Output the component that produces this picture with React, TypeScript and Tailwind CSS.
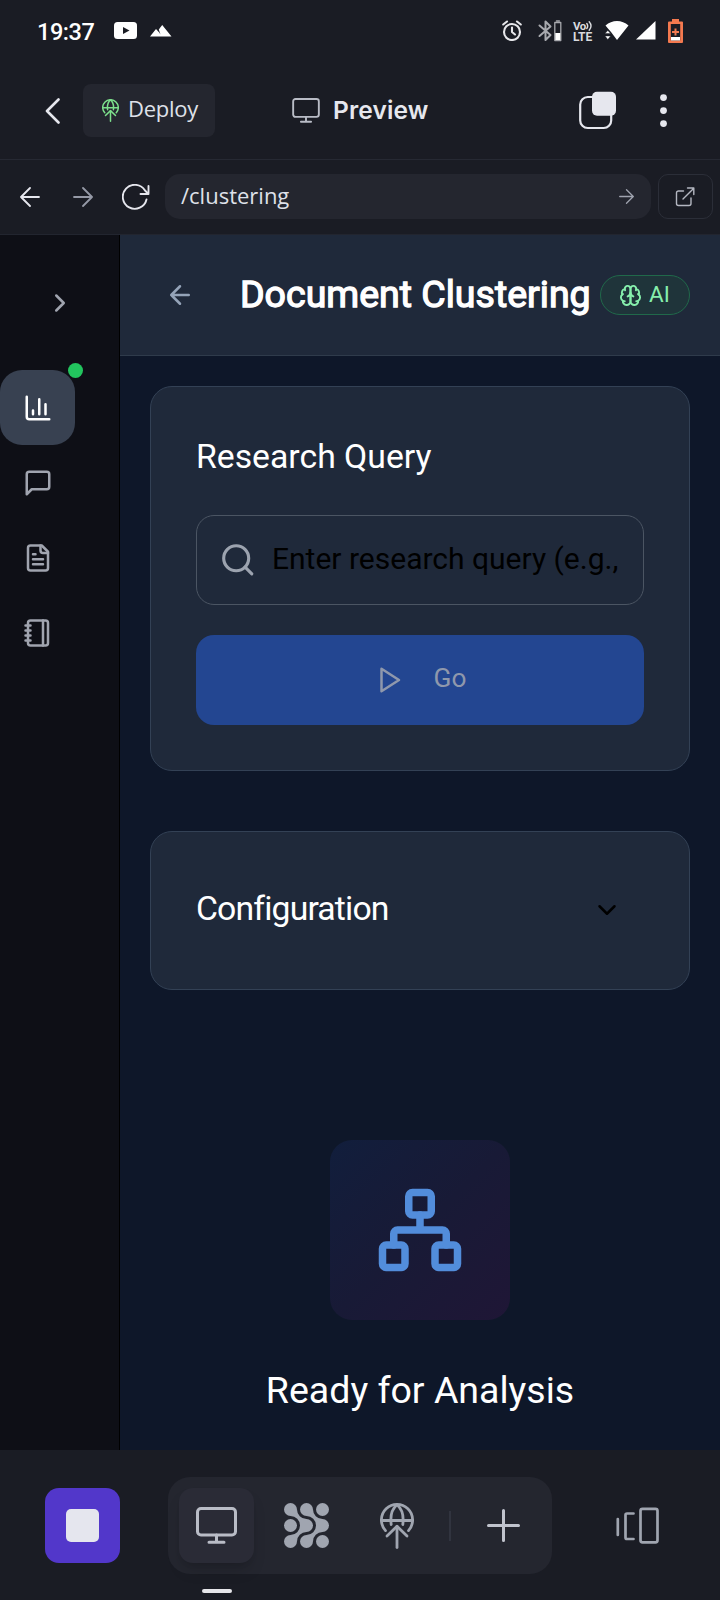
import type { ReactNode } from "react";

type IconProps = {
  w: number;
  h?: number;
  box?: string;
  sw?: number;
  className?: string;
  children: ReactNode;
};

function Icon({ w, h = w, box = "0 0 24 24", sw = 2, className = "", children }: IconProps) {
  return (
    <svg
      width={w}
      height={h}
      viewBox={box}
      fill="none"
      stroke="currentColor"
      strokeWidth={sw}
      strokeLinecap="round"
      strokeLinejoin="round"
      className={`block shrink-0 ${className}`}
    >
      {children}
    </svg>
  );
}

function GlobeUp({ w, h, sw, className }: { w: number; h: number; sw: number; className?: string }) {
  return (
    <Icon w={w} h={h} box="0 0 34 46" sw={sw} className={className}>
      <path d="M5.5 27.6A15.6 15.6 0 1 1 28.5 27.6" />
      <path d="M1.5 17.5h31" />
      <path d="M11.2 21.5C10.2 14 12 6 17 1.8 22 6 23.8 14 22.8 21.500" />
      <path d="M17 44.500V23.500" />
      <path d="M7 33L17 23.300l10 9.700" />
    </Icon>
  );
}

function Monitor({ w, h, sw }: { w: number; h: number; sw: number }) {
  return (
    <Icon w={w} h={h} box="0 0 41 37" sw={sw} className="text-[#b9bcc6]">
      <rect x="1.500" y="1.500" width="38" height="26.500" rx="3.500" />
      <path d="M20.500 28v7M13 35.200h15" />
    </Icon>
  );
}

function StatusBar() {
  return (
    <div className="flex h-[62px] items-start pl-[37px] pr-[37px] pt-[18px] text-white">
      <span className="mt-px w-[77px] font-[Roboto,sans-serif] text-[23.5px] font-medium leading-[26px] tracking-[-0.45px]">19:37</span>
      <svg width="23" height="17" viewBox="0 0 23 17" className="mt-1 block">
        <rect width="23" height="17" rx="3.500" fill="#fff" />
        <path d="M9 5l6.500 3.500L9 12z" fill="#1a1c24" />
      </svg>
      <svg width="22" height="12" viewBox="0 0 22 12" className="ml-[13px] mt-[7px] block">
        <path d="M0 11.500L6 4l3.200 3.600L10.500 9.500 8.800 4.600 12.200 0 21.500 11.500z" fill="#fff" />
      </svg>
      <div className="ml-auto flex items-start">
        <Icon w={20} h={22} box="0 0 20 22" sw={2.100} className="mr-px mt-px text-[#e6e6ea]">
          <circle cx="10" cy="13" r="8" />
          <path d="M10 8.500V13l3 2.500M1.200 5.500L5 2.500M18.800 5.500L15 2.500" />
        </Icon>
        <Icon w={25} h={22} box="0 0 25 22" sw={2} className="ml-[15px] mt-[2px] text-[#a8a9ae]">
          <path d="M1.500 5.500L12.500 15l-5 5V1.500l5 5L1.500 16" />
          <rect x="16.800" y="2.500" width="6" height="18" strokeWidth="1.300" />
          <path d="M18.500 1h2.800" strokeWidth="1.500" />
          <rect x="17.300" y="13" width="5" height="7" fill="#fff" stroke="none" />
        </Icon>
        <div className="ml-[10px] mt-[2px] flex w-[22px] flex-col font-[Roboto,sans-serif] text-[#d9dade]">
          <div className="flex h-[11px] items-center">
            <span className="text-[11.5px] font-bold leading-[10px] tracking-[-0.4px]">Vo</span>
            <Icon w={7} h={10} box="0 0 7 10" sw={1.400}>
              <path d="M.8 2.500q1.800 2.500 0 5M3.200 .8q3.600 4.200 0 8.400" />
            </Icon>
          </div>
          <span className="text-[12px] font-bold leading-[13px] tracking-[-0.1px]">LTE</span>
        </div>
        <svg width="24" height="20" viewBox="0 0 24 20" className="ml-[10px] mt-[3px] block">
          <path d="M.5 4.500C7-1.500 17-1.500 23.500 4.500L12 19 6 11 4 8.800z" fill="#fff" />
          <path d="M0 12.500L2.800 9.500 5.600 12.500zM0 15h5.600L2.800 18.500z" fill="#fff" stroke="#1a1c24" strokeWidth=".4" />
        </svg>
        <svg width="20" height="19" viewBox="0 0 20 19" className="ml-[7px] mt-[3px] block">
          <path d="M0 18.500L19.500 0v18.500z" fill="#fff" />
        </svg>
        <svg width="15" height="24" viewBox="0 0 15 24" className="ml-[12px] mt-[1px] block">
          <path d="M4 0h7v2.500h3q1 0 1 1V23q0 1-1 1H1q-1 0-1-1V3.500q0-1 1-1h3z" fill="#f4794f" />
          <rect x="2.800" y="5" width="9.400" height="16.500" fill="#1a1c24" />
          <path d="M6.500 9.500h2v2.500h2.500v2H8.500v2.500h-2V14H4v-2h2.500z" fill="#f4794f" />
          <rect x="3" y="18" width="9" height="3.500" fill="#fff" />
        </svg>
      </div>
    </div>
  );
}

function TitleBar() {
  return (
    <div className="flex h-[98px] items-center border-b border-[#262933] pl-[44px] pr-[53px]">
      <Icon w={16} h={26} box="0 0 16 26" sw={2.600} className="text-[#e6e7ee]">
        <path d="M14.500 1.500L3 13l11.500 11.500" />
      </Icon>
      <button className="ml-[23px] flex h-[53px] w-[132px] items-center rounded-lg bg-[#24262f] pl-[19px] text-[#dfe1e9]">
        <GlobeUp w={17} h={23} sw={3} className="text-[#7de08c]" />
        <span className="-mt-[5px] ml-[9px] font-['Open_Sans',sans-serif] text-[22px] leading-[30px] tracking-[-0.25px]">Deploy</span>
      </button>
      <div className="ml-[77px] flex items-center text-[#e6e7ee]">
        <Monitor w={28} h={25} sw={2.800} />
        <span className="-mt-[2px] ml-[13px] font-[Inter,sans-serif] text-[24.5px] font-semibold leading-[30px] tracking-[0.15px]">Preview</span>
      </div>
      <div className="ml-auto flex items-center gap-[42px]">
        <svg width="39" height="39" viewBox="0 0 39 39" className="block">
          <rect x="2.200" y="6" width="31" height="31" rx="7.500" fill="none" stroke="#e6e7ee" strokeWidth="2.200" />
          <rect x="14" y=".8" width="24" height="24" rx="5" fill="#e6e7ee" />
        </svg>
        <svg width="8" height="34" viewBox="0 0 8 34" className="block" fill="#e6e7ee">
          <circle cx="4.500" cy="3.600" r="3.400" />
          <circle cx="4.500" cy="16.600" r="3.400" />
          <circle cx="4.500" cy="29.600" r="3.400" />
        </svg>
      </div>
    </div>
  );
}

function AddressBar() {
  return (
    <div className="flex h-[75px] items-start border-b border-[#22252f] pl-[20px] pr-[7px] pt-[14px]">
      <div className="flex h-[45px] items-center">
        <Icon w={20} box="0 0 20 20" sw={1.800} className="text-[#e6e7ee]">
          <path d="M19 10H1.500M10 1L1 10l9 9" />
        </Icon>
        <Icon w={20} box="0 0 20 20" sw={1.800} className="ml-[33px] text-[#9599a6]">
          <path d="M1 10h17.500M10 1l9 9-9 9" />
        </Icon>
        <Icon w={28} h={26} box="0 0 28 26" sw={1.900} className="ml-[29px] text-[#e6e7ee]">
          <path d="M24.500 15.500A12 12 0 1 1 23 6.500l3 3" />
          <path d="M26.500 2v8h-8" />
        </Icon>
      </div>
      <div className="ml-[15px] flex h-[45px] w-[486px] items-center justify-between rounded-[15px] bg-[#24262f] pl-4 pr-[17px] text-[#dfe1e9]">
        <span className="-mt-[4px] font-['Open_Sans',sans-serif] text-[22px] leading-[30px]">/clustering</span>
        <Icon w={15} box="0 0 15 15" sw={1.300} className="text-[#9fa3af]">
          <path d="M.7 7.500h13.500M7.500 .8l6.800 6.700-6.800 6.700" />
        </Icon>
      </div>
      <button className="ml-[7px] flex h-[45px] w-[55px] items-center justify-center rounded-[10px] border border-[#2b2e38] text-[#b4b7c1]">
        <Icon w={20} box="0 0 20 20" sw={1.400} className="mr-px">
          <path d="M8.500 4H3.500A2 2 0 0 0 1.500 6v10.500a2 2 0 0 0 2 2h10.500a2 2 0 0 0 2-2V11" />
          <path d="M8 12L18.800 1.200M12.500 1h6.300v6.500" />
        </Icon>
      </button>
    </div>
  );
}

function Sidebar() {
  return (
    <aside className="flex w-[120px] flex-col border-r border-black bg-[#0e0f16] text-[#a0a4af]">
      <div className="flex h-[135px] w-[120px] items-center justify-center">
        <Icon w={30}>
          <path d="m9 18 6-6-6-6" />
        </Icon>
      </div>
      <div className="relative flex size-[75px] items-center justify-center rounded-[22px] bg-[#384151] text-white">
        <Icon w={30}>
          <path d="M3 3v16a2 2 0 0 0 2 2h16M18 17V9M13 17V5M8 17v-3" />
        </Icon>
        <span className="absolute -right-2 -top-[7px] size-[15px] rounded-full bg-[#22c55e]" />
      </div>
      <div className="flex size-[75px] items-center justify-center">
        <Icon w={30}>
          <path d="M21 15a2 2 0 0 1-2 2H7l-4 4V5a2 2 0 0 1 2-2h14a2 2 0 0 1 2 2z" />
        </Icon>
      </div>
      <div className="flex size-[75px] items-center justify-center">
        <Icon w={30}>
          <path d="M15 2H6a2 2 0 0 0-2 2v16a2 2 0 0 0 2 2h12a2 2 0 0 0 2-2V7Z" />
          <path d="M14 2v4a2 2 0 0 0 2 2h4M10 9H8M16 13H8M16 17H8" />
        </Icon>
      </div>
      <div className="flex size-[75px] items-center justify-center">
        <Icon w={30}>
          <path d="M2 6h4M2 10h4M2 14h4M2 18h4M16 2v20" />
          <rect width="16" height="20" x="4" y="2" rx="2" />
        </Icon>
      </div>
    </aside>
  );
}

function PageHeader() {
  return (
    <header className="flex h-[121px] items-center border-b border-[#2f3b4b] bg-[#1f293a] pl-[45px] pr-[30px]">
      <Icon w={30} className="text-[#94a3b8]">
        <path d="m12 19-7-7 7-7M19 12H5" />
      </Icon>
      <h1 className="-mt-[2px] ml-[45px] whitespace-nowrap font-[Roboto,sans-serif] text-[37.5px] font-normal leading-[45px] text-white [-webkit-text-stroke:1.3px_white]">
        Document Clustering
      </h1>
      <div className="ml-auto flex h-10 w-[90px] shrink-0 items-center rounded-full border border-[#20694a] bg-[#1f343a] pl-[18px] text-[#86efac]">
        <Icon w={23}>
          <path d="M12 5a3 3 0 1 0-5.997.125 4 4 0 0 0-2.526 5.770 4 4 0 0 0 .556 6.588A4 4 0 1 0 12 18Z" />
          <path d="M12 5a3 3 0 1 1 5.997.125 4 4 0 0 1 2.526 5.770 4 4 0 0 1-.556 6.588A4 4 0 1 1 12 18Z" />
          <path d="M15 13a4.500 4.500 0 0 1-3-4 4.500 4.500 0 0 1-3 4" />
          <path d="M17.600 6.500a3 3 0 0 0 .4-1.400M6 5.100a3 3 0 0 0 .400 1.400M3.500 10.900a4 4 0 0 1 .6-.4M19.900 10.500a4 4 0 0 1 .6 .4M6 18a4 4 0 0 1-2-.5M20 17.500a4 4 0 0 1-2 .5" />
        </Icon>
        <span className="-mt-[2px] ml-[7px] font-[Roboto,sans-serif] text-[22.5px] leading-[30px]">AI</span>
      </div>
    </header>
  );
}

function MainContent() {
  return (
    <main className="flex flex-1 flex-col bg-[#0e1729] font-[Roboto,sans-serif] text-white">
      <PageHeader />
      <div className="flex flex-col px-[30px] pt-[30px]">
        <section className="flex h-[385px] flex-col rounded-[22px] border border-[#334155] bg-[#1f293a] px-[45px] pt-[47px]">
          <h2 className="whitespace-nowrap text-[33.75px] leading-[45px]">Research Query</h2>
          <div className="mt-[36px] flex h-[90px] items-center rounded-[18px] border border-[#4b5563] pl-[22px]">
            <Icon w={37.5} className="text-[#9ca3af]">
              <circle cx="11" cy="11" r="8" />
              <path d="m21 21-4.300-4.300" />
            </Icon>
            <span className="-mt-[2px] ml-[15.5px] whitespace-nowrap text-[30px] leading-[40px] text-black">Enter research query (e.g.,</span>
          </div>
          <button className="mt-[30px] flex h-[90px] items-center rounded-[18px] bg-[#234691] pl-[178px] text-[#8f98ac]">
            <Icon w={30}>
              <path d="M6 3l14 9-14 9z" />
            </Icon>
            <span className="-mt-[4px] ml-[29.5px] text-[26.25px] leading-[34px]">Go</span>
          </button>
        </section>
        <section className="mt-[60px] flex h-[159px] items-center justify-between rounded-[22px] border border-[#334155] bg-[#1f293a] pb-[2px] pl-[45px] pr-[67px]">
          <h2 className="-mt-[2px] whitespace-nowrap text-[33.75px] leading-[45px] tracking-[-0.85px]">Configuration</h2>
          <Icon w={30} className="text-black">
            <path d="m6 9 6 6 6-6" />
          </Icon>
        </section>
        <section className="flex flex-col items-center pt-[150px]">
          <div className="flex size-[180px] items-center justify-center rounded-[22px] bg-linear-to-br from-[#111e3c] via-[#181a36] to-[#1f1636]">
            <Icon w={90} className="text-[#528ddb]">
              <rect x="16" y="16" width="6" height="6" rx="1" />
              <rect x="2" y="16" width="6" height="6" rx="1" />
              <rect x="9" y="2" width="6" height="6" rx="1" />
              <path d="M5 16v-3a1 1 0 0 1 1-1h12a1 1 0 0 1 1 1v3M12 12V8" />
            </Icon>
          </div>
          <h3 className="mt-[48px] whitespace-nowrap text-[37.5px] leading-[45px]">Ready for Analysis</h3>
        </section>
      </div>
    </main>
  );
}

function BottomBar() {
  return (
    <nav className="flex h-[150px] items-start bg-[#1a1c24] pl-[45px] pt-[27px]">
      <button className="mt-[11px] flex size-[75px] items-center justify-center rounded-[14px] bg-[#5237ca]">
        <span className="size-[33px] rounded-[5px] bg-[#e5e6ee]" />
      </button>
      <div className="ml-[48px] flex h-[97px] w-[384px] items-center rounded-[22px] bg-[#24262f] pl-[11px]">
        <div className="relative flex size-[75px] items-center justify-center rounded-[14px] bg-[#2a2b36] shadow-lg shadow-black/15">
          <Monitor w={41} h={37} sw={3} />
          <span className="absolute left-[23px] top-[101px] h-1 w-[30px] rounded-full bg-[#e6e6ea]" />
        </div>
        <svg width="45" height="45" viewBox="0 0 45 45" className="ml-[30px] block" fill="#a0a5b0">
          <circle cx="6.500" cy="6.500" r="6.500" />
          <circle cx="22.500" cy="6.500" r="6.500" />
          <circle cx="38.500" cy="6.500" r="6.500" />
          <circle cx="6.500" cy="22.500" r="6.500" />
          <circle cx="22.500" cy="22.500" r="6.500" />
          <circle cx="38.500" cy="22.500" r="6.500" />
          <circle cx="6.500" cy="38.500" r="6.500" />
          <circle cx="22.500" cy="38.500" r="6.500" />
          <circle cx="38.500" cy="38.500" r="6.500" />
          <path d="M13 6.500A9.500 9.500 0 0 0 22.500 16V29A9.500 9.500 0 0 0 13 38.500L6.500 32A9.500 9.500 0 0 0 16 22.500A9.500 9.500 0 0 0 6.500 13z" />
          <path d="M29 6.500A9.500 9.500 0 0 0 38.500 16V29A9.500 9.500 0 0 0 29 38.500L22.500 32A9.500 9.500 0 0 0 32 22.500A9.500 9.500 0 0 0 22.500 13z" />
        </svg>
        <GlobeUp w={34} h={46} sw={2.800} className="ml-[51px] -mr-px text-[#a0a5b0]" />
        <span className="ml-[36px] h-[30px] w-[2px] bg-[#31343f]" />
        <Icon w={33} box="0 0 33 33" sw={3} className="ml-[36px] text-[#c0c3cd]">
          <path d="M16.500 1.500v30M1.500 16.500h30" />
        </Icon>
      </div>
      <Icon w={43} h={37} box="0 0 43 37" sw={2.700} className="ml-[64px] mt-[30px] text-[#a0a5b0]">
        <path d="M1.800 12v16M17.500 6.500h-6.500a1.500 1.500 0 0 0-1.500 1.500v22.500a1.500 1.500 0 0 0 1.500 1.500h6.500" />
        <rect x="24.500" y="1.800" width="17" height="33.500" rx="2" />
      </Icon>
    </nav>
  );
}

export default function App() {
  return (
    <div className="flex h-[1600px] w-[720px] flex-col overflow-hidden bg-[#1a1c24]">
      <StatusBar />
      <TitleBar />
      <AddressBar />
      <div className="flex min-h-0 flex-1">
        <Sidebar />
        <MainContent />
      </div>
      <BottomBar />
    </div>
  );
}
